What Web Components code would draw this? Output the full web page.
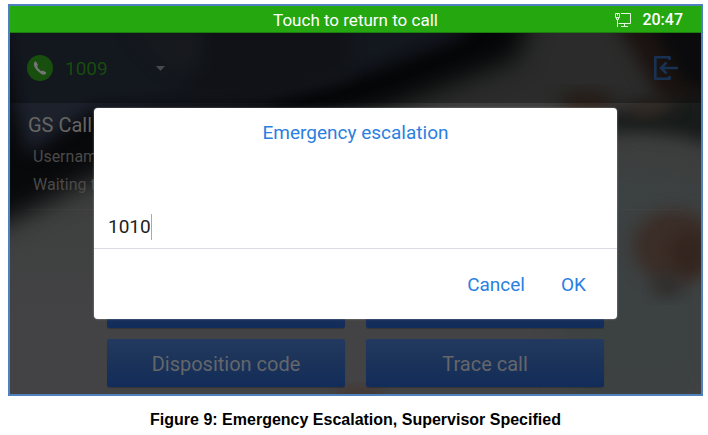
<!DOCTYPE html>
<html lang="en">
<head>
<meta charset="utf-8">
<meta name="viewport" content="width=device-width, initial-scale=1">
<title>Emergency escalation</title>
<style>
  body {
    margin: 0;
    padding: 4px 5px 4px 8px;
    background: #fff;
    font-family: Roboto, "Noto Sans", sans-serif;
  }
</style>
</head>
<body>
<phone-figure>
  <phone-status slot="screen" time="20:47">Touch to return to call</phone-status>
  <phone-stage slot="screen">
    <account-bar slot="header" account="1009"></account-bar>
    <agent-info name="GS Call">
      <div>Username</div>
      <div>Waiting time</div>
    </agent-info>
    <action-grid>
      <action-button label="Emergency escalation"></action-button>
      <action-button label="Record call"></action-button>
      <action-button>Disposition code</action-button>
      <action-button>Trace call</action-button>
    </action-grid>
    <prompt-dialog slot="overlay" value="1010">Emergency escalation</prompt-dialog>
  </phone-stage>
  <span slot="caption">Figure 9: Emergency Escalation, Supervisor Specified</span>
</phone-figure>

<script>
(function () {
  function define(name, html, setup) {
    const template = document.createElement("template");
    template.innerHTML = html;

    customElements.define(name, class extends HTMLElement {
      constructor() {
        super();
        this.attachShadow({ mode: "open" });
        this.shadowRoot.appendChild(template.content.cloneNode(true));
      }

      connectedCallback() {
        if (setup) setup(this, this.shadowRoot);
      }
    });
  }

  define("phone-figure", `
    <style>
      :host { display: block; }
      figure { margin: 0; }
      .screen { border: 2px solid #4f81bd; }
      figcaption {
        padding-top: 14px;
        text-align: center;
        font: bold 16px/20px "Liberation Sans", Arial, sans-serif;
        color: #000;
      }
    </style>
    <figure>
      <div class="screen"><slot name="screen"></slot></div>
      <figcaption><slot name="caption"></slot></figcaption>
    </figure>
  `);

  define("phone-status", `
    <style>
      :host {
        display: grid;
        grid-template-columns: 1fr auto 1fr;
        align-items: center;
        height: 27px;
        padding: 2px 18px 0;
        box-sizing: border-box;
        background: #25a70f;
        border-bottom: 1px solid #1a7d0c;
        color: #fff;
      }
      button {
        grid-column: 2;
        padding: 0;
        border: 0;
        background: none;
        color: inherit;
        font: 17px/24px Roboto, sans-serif;
      }
      .right {
        display: flex;
        justify-content: flex-end;
        align-items: center;
        gap: 10px;
        font: 500 16px/24px Roboto, sans-serif;
      }
      svg { display: block; }
    </style>
    <button type="button"><slot></slot></button>
    <div class="right">
      <svg width="18" height="16" viewBox="0 0 18 16" fill="none" stroke="#e4f6e1" aria-hidden="true">
        <path d="M7 1.5H16.5V11.5H4.5M10.500 11.500V14M7 14.500H14"/>
        <path d="M1.500 1.500H5.500V5.500H1.500ZM3.500 1.500V3.500M2.500 5.500V7.500H4.500V5.500M3.500 7.500V15"/>
      </svg>
      <time id="time"></time>
    </div>
  `, (host, root) => {
    root.getElementById("time").textContent = host.getAttribute("time");
  });

  define("phone-stage", `
    <style>
      :host {
        display: block;
        position: relative;
        overflow: hidden;
        background: #3e3f3f;
      }
      .wallpaper {
        position: absolute;
        inset: 0;
        width: 100%;
        height: 100%;
      }
      header {
        position: relative;
        background: rgba(0, 0, 0, 0.3);
      }
      main { position: relative; }
    </style>
    <svg class="wallpaper" viewBox="0 0 691 361" preserveAspectRatio="none" aria-hidden="true">
      <defs>
        <linearGradient id="base" x1="0" y1="0" x2="0" y2="1">
          <stop offset="0.4" stop-color="#3d3e3d"/>
          <stop offset="0.8" stop-color="#434345"/>
        </linearGradient>
        <filter id="soft" x="-30%" y="-30%" width="160%" height="160%" color-interpolation-filters="sRGB"><feGaussianBlur stdDeviation="8"/></filter>
        <filter id="softer" x="-40%" y="-40%" width="180%" height="180%" color-interpolation-filters="sRGB"><feGaussianBlur stdDeviation="13"/></filter>
      </defs>
      <rect width="691" height="361" fill="url(#base)"/>
      <path d="M540 150Q610 110 700 150V361H560Z" fill="#3c4141" filter="url(#softer)"/>
      <path d="M-30 -30H524L508 25L370 78L84 145L0 188L-30 202Z" fill="#08090b" filter="url(#softer)"/>
      <path d="M-10 -30H475L450 5L330 50L250 68L84 76L42 104L18 122L4 70Z" fill="#1c212c" filter="url(#soft)"/>
      <path d="M185 -20H335L340 40L250 64H165L195 30Z" fill="#181b21" filter="url(#soft)"/>
      <path d="M120 -5H195L185 35Q165 48 145 25Z" fill="#21252a" filter="url(#soft)"/>
      <path d="M600 -20H720V80L650 66Z" fill="#281d19" filter="url(#soft)"/>
      <path d="M635 -20H720V60L672 50Z" fill="#101113" filter="url(#soft)"/>
      <ellipse cx="576" cy="69" rx="26" ry="11" fill="#35271f" filter="url(#soft)"/>
      <path d="M590 82Q650 64 720 60V118Q660 94 590 100Z" fill="#171b1a" filter="url(#soft)"/>
      <path d="M608 75L650 66L668 73L635 84Z" fill="#3a2d27" filter="url(#soft)"/>
      <ellipse cx="665" cy="213" rx="42" ry="36" fill="#3b2d27" filter="url(#soft)"/>
      <ellipse cx="678" cy="220" rx="18" ry="22" fill="#33251f" filter="url(#soft)"/>
      <ellipse cx="657" cy="252" rx="16" ry="12" fill="#302d2c" filter="url(#soft)"/>
      <ellipse cx="350" cy="365" rx="26" ry="10" fill="#45362f" filter="url(#soft)"/>
    </svg>
    <header><slot name="header"></slot></header>
    <main><slot></slot></main>
    <slot name="overlay"></slot>
  `);

  define("account-bar", `
    <style>
      :host {
        display: flex;
        align-items: center;
        justify-content: space-between;
        height: 70px;
        padding: 0 22px 0 17px;
      }
      label {
        display: flex;
        align-items: center;
        gap: 12px;
      }
      .picker {
        display: grid;
        align-items: center;
        width: 100px;
      }
      .picker > * { grid-area: 1 / 1; }
      select {
        appearance: none;
        padding: 2px 0 0;
        border: 0;
        background: none;
        color: #184b10;
        font: 19px/28px Roboto, sans-serif;
      }
      .arrow {
        justify-self: end;
        pointer-events: none;
      }
      button {
        padding: 0;
        border: 0;
        background: none;
      }
      svg { display: block; }
    </style>
    <label>
      <svg width="26" height="26" viewBox="0 0 26 26" role="img" aria-label="Account">
        <circle cx="13" cy="13" r="13" fill="#184f0e"/>
        <path d="M7.200 7.500Q8.400 5.800 9.600 7.400L10.700 9.500Q11.100 10.500 10 11.400Q11.300 14 14.200 16.200Q15.200 15.200 16.100 15.700L18.700 17.100Q20 18.100 18.500 19.300Q16.800 20.500 13.600 18.500Q9.300 15.900 7.400 11.800Q6.300 9.100 7.200 7.500Z" fill="#757575"/>
      </svg>
      <span class="picker">
        <select><option id="account"></option></select>
        <svg class="arrow" width="9" height="5" viewBox="0 0 9 5" aria-hidden="true">
          <path d="M0 0H9L4.500 5Z" fill="#484a4c"/>
        </svg>
      </span>
    </label>
    <button type="button" aria-label="Log out">
      <svg width="26" height="26" viewBox="0 0 26 26" fill="none" stroke="#173252" stroke-width="2.600" stroke-linejoin="round">
        <path d="M16.500 5V2.300H2.300V23.700H16.500V21"/>
        <path d="M25 13H8.500M13.500 7.500L8 13L13.500 18.500"/>
      </svg>
    </button>
  `, (host, root) => {
    root.getElementById("account").textContent = host.getAttribute("account");
  });

  define("agent-info", `
    <style>
      :host {
        display: block;
        margin: 0 18px;
        padding: 8px 0 10px;
        border-bottom: 1px solid rgba(120, 120, 120, 0.08);
        color: #4b4a48;
        font-size: 16px;
        line-height: 28px;
      }
      h1 {
        margin: 0 0 4px;
        color: #666563;
        font-size: 20px;
        font-weight: 400;
        line-height: 28px;
      }
      .rows { padding-left: 5px; }
    </style>
    <h1 id="name"></h1>
    <div class="rows"><slot></slot></div>
  `, (host, root) => {
    root.getElementById("name").textContent = host.getAttribute("name");
  });

  define("action-grid", `
    <style>
      :host {
        display: grid;
        grid-template-columns: 1fr 1fr;
        gap: 11px 21px;
        padding: 70px 97px 7px;
      }
    </style>
    <slot></slot>
  `);

  define("action-button", `
    <style>
      :host { display: grid; }
      button {
        height: 48px;
        padding: 2px 0 0;
        border: 0;
        border-radius: 2px;
        background: linear-gradient(#223a60, #1b3359 50%, #122c5b);
        box-shadow: 0 1px 1px rgba(0, 0, 0, 0.2);
        color: #64666a;
        font: 20px/24px Roboto, sans-serif;
      }
    </style>
    <button type="button"><slot></slot></button>
  `, (host, root) => {
    const label = host.getAttribute("label");
    if (label) root.querySelector("button").setAttribute("aria-label", label);
  });

  define("prompt-dialog", `
    <style>
      :host {
        position: absolute;
        inset: 0;
        padding: 75px 84px;
      }
      form {
        background: #fff;
        border-radius: 4px;
        box-shadow: 0 0 2px rgba(255, 255, 255, 0.5);
      }
      label {
        display: block;
        padding: 11px 0 62px;
        text-align: center;
        color: #2a80e0;
        font-size: 19px;
        line-height: 28px;
      }
      .field {
        display: flex;
        align-items: center;
        height: 36px;
        padding: 0 14px 3px;
        border-bottom: 1px solid #d9dde3;
      }
      input {
        field-sizing: content;
        padding: 0;
        border: 0;
        outline: 0;
        background: none;
        color: #222;
        font: 19px/28px Roboto, sans-serif;
      }
      .caret {
        width: 1px;
        height: 26px;
        background: #aaa;
      }
      .buttons {
        display: flex;
        justify-content: flex-end;
        gap: 36px;
        padding: 22px 31px 20px;
      }
      button {
        padding: 0;
        border: 0;
        background: none;
        color: #2a80e0;
        font: 19px/28px Roboto, sans-serif;
      }
    </style>
    <form role="dialog">
      <label for="number"><slot></slot></label>
      <div class="field"><input id="number" type="text"><span class="caret"></span></div>
      <div class="buttons">
        <button type="button">Cancel</button>
        <button type="button">OK</button>
      </div>
    </form>
  `, (host, root) => {
    root.getElementById("number").value = host.getAttribute("value");
  });
})();
</script>
</body>
</html>
